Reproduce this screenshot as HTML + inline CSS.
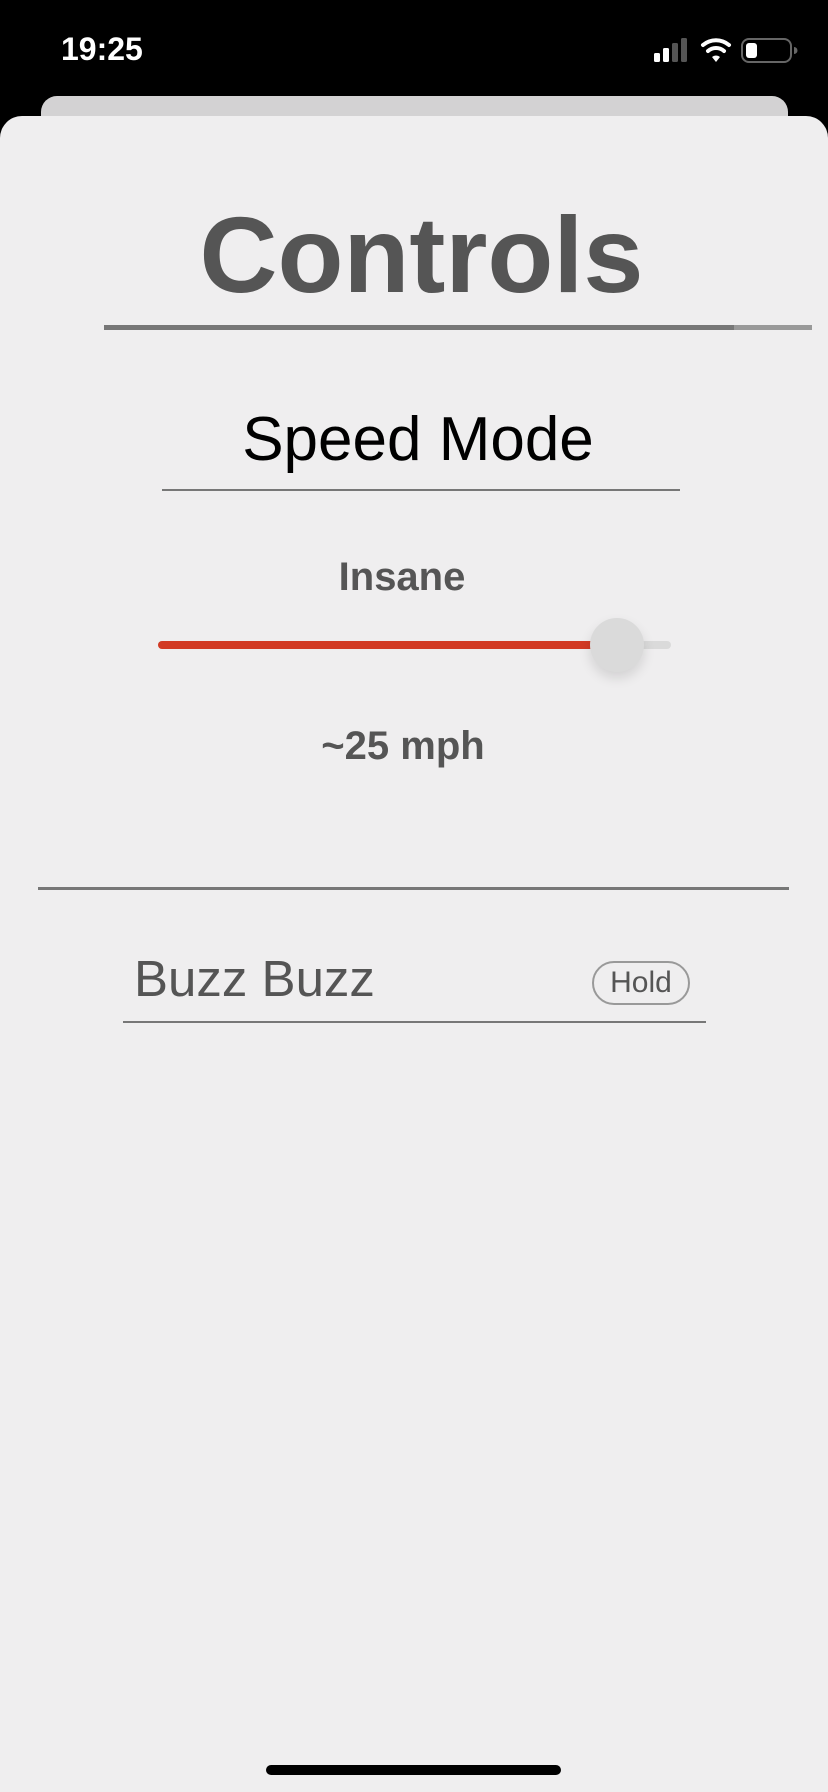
<!DOCTYPE html>
<html><head><meta charset="utf-8"><style>
html,body{margin:0;padding:0}
body{width:828px;height:1792px;background:#000;position:relative;overflow:hidden;font-family:"Liberation Sans",Arial,sans-serif}
.abs{position:absolute}
</style></head><body>
<div class="abs" style="left:61px;top:31px;color:#fff;font-size:32px;font-weight:bold;letter-spacing:0px">19:25</div>
<svg class="abs" style="left:650px;top:36px" width="150" height="30" viewBox="0 0 150 30">
<rect x="4" y="17" width="6" height="9" rx="1.5" fill="#fff"/>
<rect x="13" y="12" width="6" height="14" rx="1.5" fill="#fff"/>
<rect x="22" y="7" width="6" height="19" rx="1.5" fill="#555"/>
<rect x="31" y="2" width="6" height="24" rx="1.5" fill="#555"/>
<path d="M53 9 a20 20 0 0 1 26 0" stroke="#fff" stroke-width="4" fill="none" stroke-linecap="round"/>
<path d="M58 15 a12 12 0 0 1 16 0" stroke="#fff" stroke-width="4" fill="none" stroke-linecap="round"/>
<path d="M62 21 l4 5 l4 -5 a6 6 0 0 0 -8 0z" fill="#fff"/>
<rect x="92" y="3" width="49" height="23" rx="7" fill="none" stroke="#666" stroke-width="2"/>
<rect x="96" y="7" width="11" height="15" rx="3" fill="#fff"/>
<path d="M144 11 v7 a3 3 0 0 0 0 -7z" fill="#666"/>
</svg>
<div class="abs" style="left:41px;top:96px;width:747px;height:60px;background:#d3d2d3;border-radius:16px 16px 0 0"></div>
<div class="abs" style="left:0;top:116px;width:828px;height:1676px;background:#efeeef;border-radius:22px 22px 0 0"></div>
<div class="abs" style="left:0;top:195px;width:843px;text-align:center;color:#555;font-size:108px;font-weight:bold;letter-spacing:0px;line-height:120px">Controls</div>
<div class="abs" style="left:104px;top:325px;width:630px;height:5px;background:#777"></div>
<div class="abs" style="left:734px;top:325px;width:78px;height:5px;background:#999"></div>
<div class="abs" style="left:0;top:404px;width:836px;text-align:center;color:#000;font-size:62px;line-height:72px">Speed Mode</div>
<div class="abs" style="left:162px;top:489px;width:518px;height:2px;background:#777"></div>
<div class="abs" style="left:0;top:553px;width:804px;text-align:center;color:#555;font-size:40px;font-weight:bold;line-height:48px">Insane</div>
<div class="abs" style="left:158px;top:641px;width:513px;height:8px;background:#dadada;border-radius:4px"></div>
<div class="abs" style="left:158px;top:641px;width:459px;height:8px;background:#d23a24;border-radius:4px 0 0 4px"></div>
<div class="abs" style="left:590px;top:618px;width:54px;height:54px;background:#dadada;border-radius:50%;box-shadow:0 6px 12px rgba(0,0,0,.12)"></div>
<div class="abs" style="left:0;top:722px;width:806px;text-align:center;color:#555;font-size:40px;font-weight:bold;line-height:48px">~25 mph</div>
<div class="abs" style="left:38px;top:887px;width:751px;height:3px;background:#777"></div>
<div class="abs" style="left:134px;top:949px;color:#555;font-size:51px;line-height:60px">Buzz Buzz</div>
<div class="abs" style="left:592px;top:961px;width:94px;height:40px;border:2px solid #999;border-radius:22px;color:#555;font-size:30px;line-height:40px;text-align:center">Hold</div>
<div class="abs" style="left:123px;top:1021px;width:583px;height:2px;background:#777"></div>
<div class="abs" style="left:266px;top:1765px;width:295px;height:10px;background:#000;border-radius:5px"></div>
</body></html>
